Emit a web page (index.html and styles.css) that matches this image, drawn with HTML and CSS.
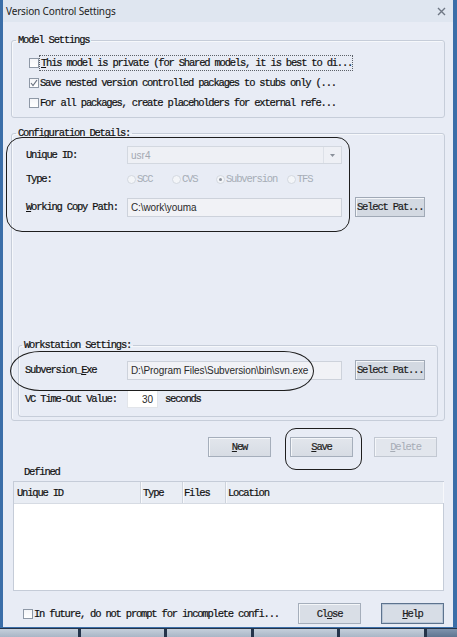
FILE: index.html
```html
<!DOCTYPE html>
<html lang="en">
<head>
    <meta charset="UTF-8">
    <meta name="viewport" content="width=device-width, initial-scale=1.0">
    <title>Version Control Settings</title>
    <link rel="stylesheet" href="styles.css">
</head>
<body>
    <div class="screen">
        <div class="window">
            <div class="titlebar">
                <span class="title">Version Control Settings</span>
                <svg class="close" width="9" height="9" viewBox="0 0 9 9">
                    <path d="M1 1 L8 8 M8 1 L1 8" stroke="#6f7784" stroke-width="1.4" fill="none"/>
                </svg>
            </div>
            <div class="content">
                <fieldset class="group model">
                    <legend>Model Settings</legend>
                    <div class="check focus">
                        <span class="box"></span>
                        <span class="txt"><u>T</u>his model is private (for Shared models, it is best to di...</span>
                    </div>
                    <div class="check">
                        <span class="box">
                            <svg width="8" height="8" viewBox="0 0 8 8"><path d="M1 4 L3 6.5 L7 1" stroke="#6a7280" stroke-width="1.2" fill="none"/></svg>
                        </span>
                        <span class="txt">Save nested version controlled packages to stubs only (...</span>
                    </div>
                    <div class="check">
                        <span class="box"></span>
                        <span class="txt">For all packages, create placeholders for external refe...</span>
                    </div>
                </fieldset>

                <fieldset class="group config">
                    <legend>Configuration Details:</legend>
                    <div class="row row-uid">
                        <span class="lbl">Unique ID:</span>
                        <div class="combo">
                            <span class="combo-val">usr4</span>
                            <span class="combo-btn">
                                <svg width="5" height="3" viewBox="0 0 5 3"><path d="M0 0 H5 L2.5 3 Z" fill="#8a909a"/></svg>
                            </span>
                        </div>
                    </div>
                    <div class="row row-type">
                        <span class="lbl">Type:</span>
                        <div class="radios">
                            <span class="radio w-scc"><span class="dot"></span>SCC</span>
                            <span class="radio w-cvs"><span class="dot"></span>CVS</span>
                            <span class="radio w-svn"><span class="dot on"></span>Subversion</span>
                            <span class="radio"><span class="dot"></span>TFS</span>
                        </div>
                    </div>
                    <div class="row row-path">
                        <span class="lbl"><u>W</u>orking Copy Path:</span>
                        <div class="field">C:\work\youma</div>
                        <button class="btn btn-sel">Select Pat...</button>
                    </div>

                    <fieldset class="group ws">
                        <legend>Workstation Settings:</legend>
                        <div class="row row-exe">
                            <span class="lbl">Subversion_<u>E</u>xe</span>
                            <div class="field">D:\Program Files\Subversion\bin\svn.exe</div>
                            <button class="btn btn-sel">Select Pat...</button>
                        </div>
                        <div class="row row-time">
                            <span class="lbl">VC Time-Out Value:</span>
                            <div class="field field-num">30</div>
                            <span class="unit">seconds</span>
                        </div>
                    </fieldset>
                </fieldset>

                <div class="actions">
                    <button class="btn"><u>N</u>ew</button>
                    <button class="btn"><u>S</u>ave</button>
                    <button class="btn disabled"><u>D</u>elete</button>
                </div>

                <div class="defined">Defined</div>
                <div class="list">
                    <div class="list-head">
                        <span class="col col-id">Unique ID</span>
                        <span class="col col-type">Type</span>
                        <span class="col col-files">Files</span>
                        <span class="col col-loc">Location</span>
                    </div>
                </div>

                <div class="footer">
                    <div class="check">
                        <span class="box"></span>
                        <span class="txt">In future, do not prompt for incomplete confi...</span>
                    </div>
                    <button class="btn btn-close">Cl<u>o</u>se</button>
                    <button class="btn btn-help"><u>H</u>elp</button>
                </div>
            </div>
        </div>

        <div class="taskbar">
            <span class="task t1"></span>
            <span class="task t2"></span>
            <span class="task t3"></span>
            <span class="task t4"></span>
            <span class="task t5"></span>
            <span class="task t6"></span>
        </div>

        <!-- hand drawn marks on top of the dialog -->
        <div class="mark mark-config"></div>
        <div class="mark mark-exe"></div>
        <div class="mark mark-save"></div>
    </div>
</body>
</html>
```

FILE: styles.css
```css
* {
    box-sizing: border-box;
}
body {
    margin: 0;
    background: #e8ecf5;
    font-family: "Liberation Mono", monospace;
    font-size: 10.5px;
    letter-spacing: -1.2px;
    color: #111;
    -webkit-text-stroke: 0.2px currentColor;
}
u {
    text-decoration: underline;
    text-underline-offset: 1px;
}
.screen {
    position: relative;
    width: 457px;
    height: 637px;
    overflow: hidden;
}
.window {
    height: 628px;
    display: flex;
    flex-direction: column;
    background: #e8ecf5;
    border-style: solid;
    border-color: #3b6ea8;
    border-width: 0 4px 1px 3px;
}
.titlebar {
    height: 22px;
    flex: none;
    display: flex;
    align-items: center;
    justify-content: space-between;
    padding: 0 7px 0 3px;
    background: #dfe6f0;
}
.title {
    font-family: "Noto Sans", sans-serif;
    font-size: 10px;
    letter-spacing: -0.15px;
    color: #222;
    -webkit-text-stroke: 0;
}
.content {
    flex: 1;
    padding: 0 8px;
    display: flex;
    flex-direction: column;
}

/* group boxes */
.group {
    margin: 0;
    min-width: 0;
    border: 1px solid #c6cdd9;
    border-radius: 3px;
    box-shadow: inset 1px 1px 0 #f6f8fb;
}
.group legend {
    padding: 0 2px;
    line-height: 12px;
    height: 12px;
}
.model {
    margin-top: 12px;
    padding: 7px 8px 4px 17px;
}
.model legend {
    margin-left: -13px;
}
.config {
    margin-top: 9px;
    padding: 7px 6px 3px 6px;
}
.config legend {
    margin-left: -2px;
}
.ws {
    margin-top: 122px;
    padding: 9px 6px 7px 6px;
}
.ws legend {
    margin-left: -3px;
}

/* check boxes */
.check {
    height: 20px;
    display: flex;
    align-items: center;
}
.check .box {
    width: 10px;
    height: 10px;
    flex: none;
    border: 1px solid #8e98a6;
    background: linear-gradient(#f4f5f8, #ffffff);
    display: flex;
    align-items: center;
    justify-content: center;
}
.check .txt {
    padding: 1px 0 1px 1px;
    line-height: 12px;
    white-space: nowrap;
}
.check.focus .txt {
    width: 314px;
    border: 1px dotted #5c6168;
}

/* rows of the configuration */
.row {
    display: flex;
    align-items: center;
}
.lbl {
    width: 101px;
    flex: none;
}
.config > .row {
    padding-left: 8px;
}
.ws .lbl {
    width: 102px;
}
.row-uid {
    height: 18px;
    margin-bottom: 6px;
}
.row-type {
    height: 18px;
    margin-bottom: 9px;
}
.row-path,
.row-exe,
.row-time {
    height: 20px;
}
.row-exe {
    margin-bottom: 9px;
}
.combo {
    width: 215px;
    height: 18px;
    display: flex;
    align-items: center;
    border: 1px solid #d3d8e0;
    background: #eef0f5;
}
.combo-val {
    flex: 1;
    padding-left: 3px;
    font-family: "Liberation Sans", sans-serif;
    font-size: 10px;
    letter-spacing: 0;
    color: #a3a8b1;
    -webkit-text-stroke: 0;
}
.combo-btn {
    width: 18px;
    height: 16px;
    border-left: 1px solid #dde1e8;
    display: flex;
    align-items: center;
    justify-content: center;
}
.radios {
    display: flex;
    align-items: center;
    color: #a6acb6;
    -webkit-text-stroke: 0;
}
.radio {
    display: flex;
    align-items: center;
}
.w-scc {
    width: 45px;
}
.w-cvs {
    width: 44px;
}
.w-svn {
    width: 71px;
}
.dot {
    width: 9px;
    height: 9px;
    margin-right: 1px;
    border-radius: 50%;
    border: 1px solid #d3d8e0;
    background: #f3f5f8;
    display: flex;
    align-items: center;
    justify-content: center;
}
.dot.on::after {
    content: "";
    width: 3px;
    height: 3px;
    border-radius: 50%;
    background: #8d939d;
}
.field {
    width: 215px;
    height: 19px;
    padding-left: 3px;
    display: flex;
    align-items: center;
    border: 1px solid #cdd2db;
    background: #f1f2f6;
    font-family: "Liberation Sans", sans-serif;
    font-size: 10px;
    letter-spacing: -0.1px;
    color: #2a2a2a;
    -webkit-text-stroke: 0;
    white-space: nowrap;
}
.field-num {
    width: 31px;
    height: 18px;
    justify-content: flex-end;
    padding: 0 4px 0 0;
    background: #ffffff;
    border-color: #e2e5ea;
}
.unit {
    margin-left: 7px;
}

/* buttons */
.btn {
    height: 20px;
    width: 63px;
    padding: 0;
    font: inherit;
    letter-spacing: inherit;
    white-space: nowrap;
    color: #1c1c1c;
    border: 1px solid #a5aebb;
    background: linear-gradient(#e2e6ec, #d7dce4);
    box-shadow: inset 1px 1px 0 #f4f6f9;
}
.btn-sel {
    width: 70px;
    margin-left: 13px;
    text-align: left;
    padding-left: 1px;
    background: #d3d9e2;
    border-color: #a0a9b6;
}
.btn.disabled {
    color: #a6acb6;
    border-color: #c2c8d2;
    background: #e2e6ed;
    -webkit-text-stroke: 0;
}
.actions {
    margin-top: 16px;
    display: flex;
    justify-content: flex-end;
    gap: 19px;
    padding-right: 8px;
}
.actions .btn:last-child {
    margin-left: 2px;
}

/* defined list */
.defined {
    margin-top: 9px;
    padding-left: 13px;
    line-height: 12px;
}
.list {
    margin: 3px 1px 0 2px;
    height: 110px;
    border: 1px solid #c5ccd8;
    background: #ffffff;
}
.list-head {
    height: 22px;
    display: flex;
    background: #e9edf4;
    border-bottom: 1px solid #d6dbe3;
}
.col {
    display: flex;
    align-items: center;
    border-right: 1px solid #cdd3dc;
    box-shadow: 1px 0 0 #f7f8fb;
}
.col-id {
    width: 127px;
    padding-left: 3px;
}
.col-type {
    width: 42px;
    padding-left: 2px;
}
.col-files {
    width: 43px;
    padding-left: 1px;
}
.col-loc {
    flex: 1;
    padding-left: 2px;
    border-right: none;
}

/* footer */
.footer {
    margin-top: 12px;
    height: 21px;
    display: flex;
    align-items: center;
    padding-left: 12px;
}
.footer .check {
    flex: 1;
}
.btn-close {
    height: 21px;
    background: #d9dee6;
}
.btn-help {
    height: 21px;
    margin: 0 1px 0 20px;
    border-color: #5d738e;
    box-shadow: inset 0 0 0 1px #b9c6d6;
    background: #d7dde6;
}

/* taskbar strip under the dialog */
.taskbar {
    height: 9px;
    display: flex;
    gap: 3px;
    background: #24344a;
    padding-top: 1px;
}
.task {
    height: 8px;
    background: linear-gradient(#c5cfdb, #a9b6c6);
}
.t1 { width: 78px; }
.t2 { width: 83px; }
.t3 { width: 84px; }
.t4 { width: 83px; }
.t5 { width: 84px; }
.t6 { flex: 1; background: linear-gradient(#7f93ad, #5f7591); }

/* marker annotations */
.mark {
    position: absolute;
    border: 1.5px solid #1e1e1e;
}
.mark-config {
    left: 6px;
    top: 137px;
    width: 344px;
    height: 95px;
    border-radius: 16px 13px 14px 16px;
}
.mark-exe {
    left: 10px;
    top: 351px;
    width: 304px;
    height: 40px;
    border-radius: 30px / 20px;
}
.mark-save {
    left: 285px;
    top: 428px;
    width: 77px;
    height: 42px;
    border-radius: 11px;
}
```
